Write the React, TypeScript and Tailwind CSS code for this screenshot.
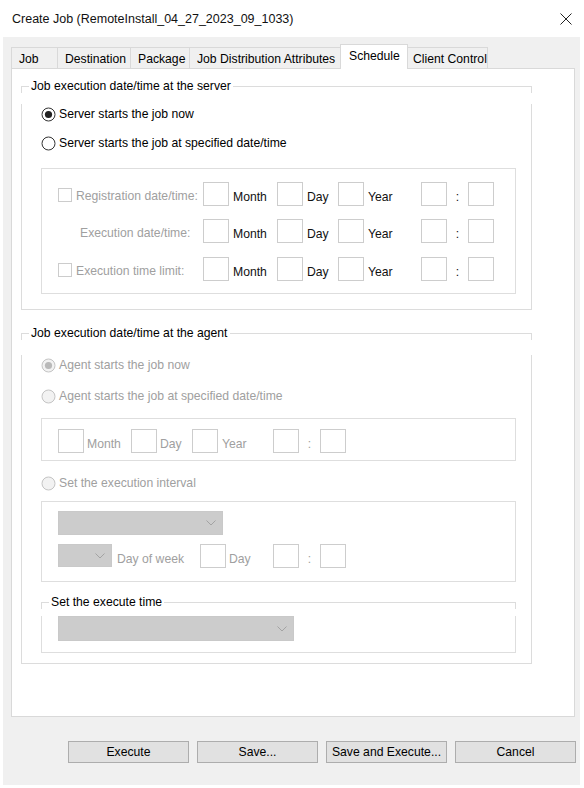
import React from "react";

const Radio = ({ checked, disabled }: { checked?: boolean; disabled?: boolean }) => (
  <svg width="15" height="15" viewBox="0 0 15 15" className="shrink-0">
    <circle
      cx="7.5"
      cy="7.5"
      r="6.5"
      fill={disabled ? "#f2f2f2" : "#ffffff"}
      stroke={disabled ? "#c4c4c4" : "#333333"}
      strokeWidth="1"
    />
    {checked && <circle cx="7.5" cy="7.5" r="3.6" fill={disabled ? "#b9b9b9" : "#222222"} />}
  </svg>
);

const Box = ({ className = "" }: { className?: string }) => (
  <div className={"h-[24px] w-[26px] shrink-0 border border-[#cdcdcd] bg-white " + className} />
);

const Chevron = () => (
  <svg width="10" height="6" viewBox="0 0 10 6" className="shrink-0">
    <polyline points="0.5,0.5 5,5 9.5,0.5" fill="none" stroke="#a3a3a3" strokeWidth="1" />
  </svg>
);

const Combo = ({ className }: { className: string }) => (
  <div className={"flex shrink-0 items-center justify-end border border-[#c9c9c9] bg-[#cccccc] pr-[6px] " + className}>
    <Chevron />
  </div>
);

function GroupHeader({ label }: { label: string }) {
  return (
    <div className="flex h-[14px]">
      <div className="mt-[7px] w-[8px] shrink-0 border-l border-t border-[#dcdcdc]" />
      <span className="shrink-0 px-[2px] leading-[14px] text-black">{label}</span>
      <div className="mt-[7px] flex-1 border-r border-t border-[#dcdcdc]" />
    </div>
  );
}

function ServerRow({ check, label, indent }: { check?: boolean; label: string; indent?: boolean }) {
  return (
    <div className="flex h-[24px] items-center">
      <div className="flex w-[18px] shrink-0">
        {check && <div className="mt-[2px] h-[14px] w-[14px] border border-[#cccccc] bg-white" />}
      </div>
      <div className={"w-[127px] shrink-0 pt-[4px] text-[#a0a0a0] " + (indent ? "pl-[4px]" : "")}>{label}</div>
      <Box />
      <div className="w-[48px] shrink-0 pl-[4px] pt-[5px] text-[#111]">Month</div>
      <Box />
      <div className="w-[35px] shrink-0 pl-[4px] pt-[5px] text-[#111]">Day</div>
      <Box />
      <div className="w-[57px] shrink-0 pl-[4px] pt-[5px] text-[#111]">Year</div>
      <Box />
      <div className="w-[21px] shrink-0 pt-[5px] text-center text-[#111]">:</div>
      <Box />
    </div>
  );
}

const tabs = [
  { label: "Job", w: "w-[47px]" },
  { label: "Destination", w: "w-[73px]" },
  { label: "Package", w: "w-[59px]" },
  { label: "Job Distribution Attributes", w: "w-[151px]" },
];

export default function App() {
  return (
    <div className="h-[788px] w-[584px] overflow-hidden bg-white font-['Liberation_Sans',Arial,sans-serif] text-[12.2px] leading-[14px] text-black">
      {/* Title bar */}
      <div className="flex h-[37px] items-center justify-between pl-[12px] pr-[12px]">
        <div className="text-[12.5px] text-[#111]">Create Job (RemoteInstall_04_27_2023_09_1033)</div>
        <svg width="12" height="12" viewBox="0 0 12 12">
          <line x1="0.5" y1="0.5" x2="11.5" y2="11.5" stroke="#222" strokeWidth="1" />
          <line x1="11.5" y1="0.5" x2="0.5" y2="11.5" stroke="#222" strokeWidth="1" />
        </svg>
      </div>

      {/* Window body */}
      <div className="ml-[3px] h-[748px] w-[577px] bg-[#f0f0f0] pl-[8px] pt-[7px]">
        {/* Tabs */}
        <div className="flex h-[24px] items-end">
          {tabs.map((t, i) => (
            <div
              key={t.label}
              className={
                "flex h-[21px] shrink-0 items-center border-t border-r border-[#d9d9d9] bg-[#f0f0f0] pl-[7px] pt-[1px] " +
                t.w +
                (i === 0 ? " border-l" : "")
              }
            >
              {t.label}
            </div>
          ))}
          <div className="relative z-10 -mb-[1px] -ml-[1px] flex h-[25px] w-[68px] shrink-0 items-center border-x border-t border-[#d9d9d9] bg-white pb-[2px] pl-[8px]">
            Schedule
          </div>
          <div className="flex h-[21px] w-[80px] shrink-0 items-center border-t border-r border-[#d9d9d9] bg-[#f0f0f0] pl-[5px] pt-[1px]">
            Client Control
          </div>
        </div>

        {/* Panel */}
        <div className="h-[649px] w-[564px] border border-[#d9d9d9] bg-white">
          {/* Group 1 */}
          <div className="ml-[9px] mt-[10px] w-[511px]">
            <GroupHeader label="Job execution date/time at the server" />
            <div className="border-x border-b border-[#dcdcdc] pb-[15px]">
              <div className="ml-[19px] mt-[11px] flex h-[20px] items-center gap-[3px]">
                <Radio checked />
                <span>Server starts the job now</span>
              </div>
              <div className="ml-[19px] mt-[9px] flex h-[20px] items-center gap-[3px]">
                <Radio />
                <span>Server starts the job at specified date/time</span>
              </div>
              <div className="ml-[19px] mt-[15px] w-[475px] border border-[#dedede] pb-[12px] pl-[16px] pt-[13px]">
                <ServerRow check label="Registration date/time:" />
                <div className="mt-[13px]">
                  <ServerRow label="Execution date/time:" indent />
                </div>
                <div className="mt-[14px]">
                  <ServerRow check label="Execution time limit:" />
                </div>
              </div>
            </div>
          </div>

          {/* Group 2 */}
          <div className="ml-[9px] mt-[16px] w-[511px]">
            <GroupHeader label="Job execution date/time at the agent" />
            <div className="border-x border-b border-[#dcdcdc] pb-[10px]">
              <div className="ml-[19px] mt-[15px] flex h-[20px] items-center gap-[3px] text-[#a0a0a0]">
                <Radio checked disabled />
                <span>Agent starts the job now</span>
              </div>
              <div className="ml-[19px] mt-[11px] flex h-[20px] items-center gap-[3px] text-[#a0a0a0]">
                <Radio disabled />
                <span>Agent starts the job at specified date/time</span>
              </div>
              <div className="ml-[19px] mt-[12px] w-[475px] border border-[#dedede] pb-[7px] pl-[16px] pt-[10px] text-[#a0a0a0]">
                <div className="flex h-[24px] items-center">
                  <Box />
                  <div className="w-[47px] shrink-0 pl-[3px] pt-[6px]">Month</div>
                  <Box />
                  <div className="w-[35px] shrink-0 pl-[3px] pt-[6px]">Day</div>
                  <Box />
                  <div className="w-[55px] shrink-0 pl-[4px] pt-[6px]">Year</div>
                  <Box />
                  <div className="w-[21px] shrink-0 pt-[6px] text-center">:</div>
                  <Box />
                </div>
              </div>
              <div className="ml-[19px] mt-[12px] flex h-[20px] items-center gap-[3px] text-[#a0a0a0]">
                <Radio disabled />
                <span>Set the execution interval</span>
              </div>
              <div className="ml-[19px] mt-[8px] w-[475px] border border-[#dedede] pb-[14px] pl-[16px] pt-[9px] text-[#a0a0a0]">
                <Combo className="h-[24px] w-[165px]" />
                <div className="mt-[9px] flex h-[23px] items-center">
                  <Combo className="h-[23px] w-[54px]" />
                  <div className="w-[88px] shrink-0 pl-[5px] pt-[7px]">Day of week</div>
                  <Box className="h-[23px]" />
                  <div className="w-[47px] shrink-0 pl-[3px] pt-[7px]">Day</div>
                  <Box className="h-[23px]" />
                  <div className="w-[21px] shrink-0 pt-[6px] text-center">:</div>
                  <Box className="h-[23px]" />
                </div>
              </div>
              <div className="ml-[19px] mt-[13px] w-[475px]">
                <GroupHeader label="Set the execute time" />
                <div className="border-x border-b border-[#dedede] pb-[11px] pl-[16px]">
                  <Combo className="mt-[7px] h-[25px] w-[236px]" />
                </div>
              </div>
            </div>
          </div>
        </div>

        {/* Buttons */}
        <div className="ml-[57px] mt-[24px] flex gap-[8px]">
          {["Execute", "Save...", "Save and Execute...", "Cancel"].map((b) => (
            <div
              key={b}
              className="flex h-[22px] w-[121px] shrink-0 items-center justify-center border border-[#adadad] bg-[#e1e1e1]"
            >
              {b}
            </div>
          ))}
        </div>
      </div>
    </div>
  );
}
